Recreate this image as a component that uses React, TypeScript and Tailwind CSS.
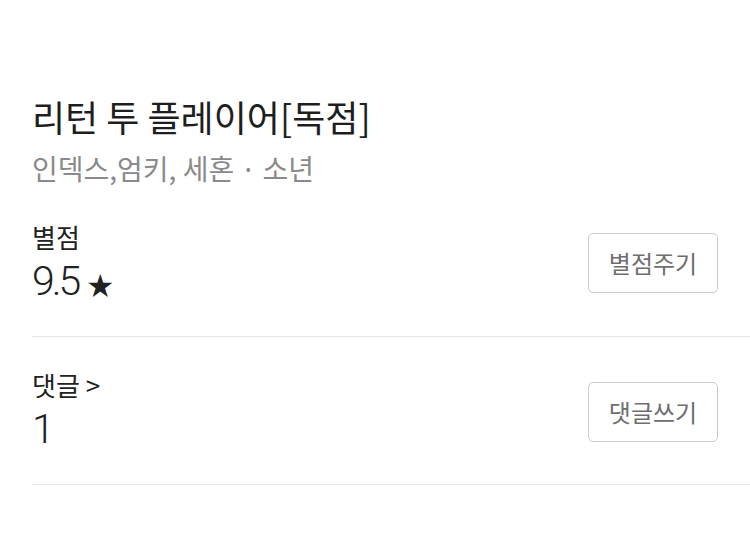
import React from "react";

const kr = { fontFamily: '"Noto Sans CJK KR", "Noto Sans", sans-serif' };
const num = { fontFamily: 'Roboto, "Noto Sans CJK KR", sans-serif' };

export default function App() {
  return (
    <div className="w-[750px] h-[545px] bg-white overflow-hidden" style={kr}>
      <div className="pl-[32px] pt-[94px]">
        <h1 className="text-[36px] leading-[44px] text-[#1e1e1e] font-normal">리턴 투 플레이어[독점]</h1>
        <p className="text-[28px] leading-[38px] text-[#8a8a8a] mt-[11px]">인덱스,엄키, 세혼 · 소년</p>
        <div className="flex items-start justify-between pr-[32px] pt-[33px] pb-[35px] border-b border-[#e6e6e6]">
          <div>
            <div className="text-[26px] leading-[34px] text-[#222]">별점</div>
            <div className="flex items-baseline mt-[7px] h-[40px] text-[#222]">
              <span className="text-[41px] leading-[40px] tracking-[-3px] font-light" style={num}>9.5</span>
              <span className="text-[26px] leading-[40px] ml-[9px]">★</span>
            </div>
          </div>
          <button className="w-[130px] h-[60px] border border-[#cccccc] rounded-[5px] text-[24px] leading-none text-[#6e6e6e] mt-[13px]">별점주기</button>
        </div>
        <div className="flex items-start justify-between pr-[32px] pt-[31px] pb-[35px] border-b border-[#ebebeb]">
          <div>
            <div className="text-[26px] leading-[34px] text-[#222]">댓글 &gt;</div>
            <div className="mt-[7px] h-[40px] text-[41px] leading-[40px] font-light text-[#222]" style={num}>1</div>
          </div>
          <button className="w-[130px] h-[60px] border border-[#cccccc] rounded-[5px] text-[24px] leading-none text-[#6e6e6e] mt-[14px]">댓글쓰기</button>
        </div>
      </div>
    </div>
  );
}
